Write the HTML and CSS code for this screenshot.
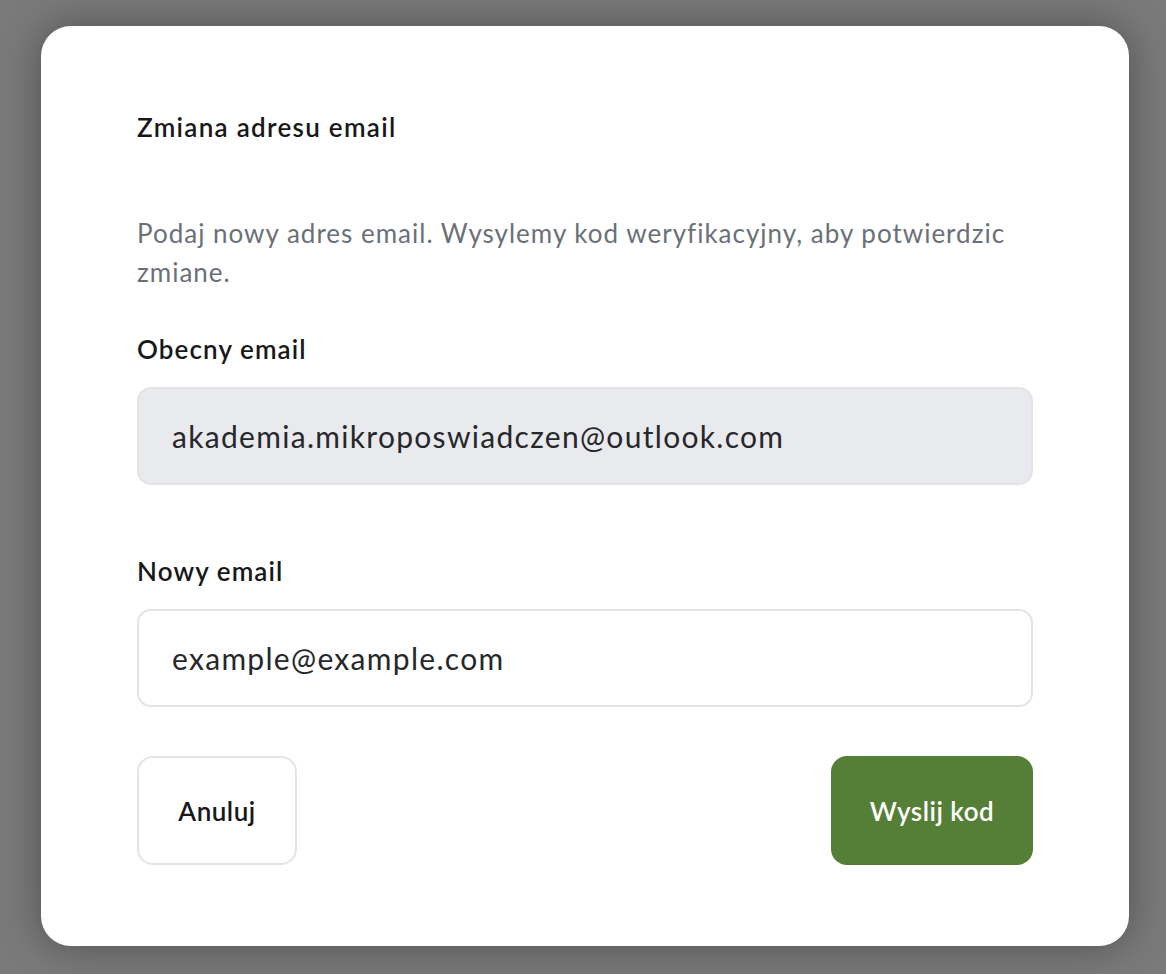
FILE: index.html
```html
<!DOCTYPE html>
<html lang="pl">
<head>
<meta charset="utf-8">
<title>Zmiana adresu email</title>
<link rel="stylesheet" href="styles.css">
</head>
<body>
<div class="overlay">
  <div class="modal">
    <h2 class="title">Zmiana adresu email</h2>
    <p class="desc">Podaj nowy adres email. Wysylemy kod weryfikacyjny, aby potwierdzic zmiane.</p>
    <div class="field">
      <label class="label">Obecny email</label>
      <div class="input input-disabled">akademia.mikroposwiadczen@outlook.com</div>
    </div>
    <div class="field field-new">
      <label class="label">Nowy email</label>
      <div class="input">example@example.com</div>
    </div>
    <div class="actions">
      <button class="btn btn-cancel">Anuluj</button>
      <button class="btn btn-primary">Wyslij kod</button>
    </div>
  </div>
</div>
</body>
</html>
```

FILE: styles.css
```css
* { box-sizing: border-box; }
html, body {
  margin: 0;
  padding: 0;
  height: 100%;
}
body {
  background: #7a7a7a;
  font-family: "Lato", "Noto Sans", sans-serif;
  color: #1c1c1e;
}
.overlay {
  padding: 26px 37px 28px 41px;
}
.modal {
  width: 1088px;
  height: 920px;
  background: #ffffff;
  border-radius: 30px;
  box-shadow: 0 0 40px rgba(0, 0, 0, 0.35);
  padding: 85px 96px 81px 96px;
  display: flex;
  flex-direction: column;
}
.title {
  margin: 0;
  font-size: 26px;
  line-height: 32px;
  font-weight: 600;
  letter-spacing: 1.3px;
  color: #18181b;
}
.desc {
  margin: 71px 0 0 0;
  font-size: 26px;
  line-height: 39px;
  letter-spacing: 1px;
  color: #6b7078;
  font-weight: 400;
}
.field {
  display: flex;
  flex-direction: column;
  margin-top: 41px;
}
.field-new {
  margin-top: 70px;
}
.label {
  font-size: 26px;
  line-height: 32px;
  font-weight: 600;
  letter-spacing: 1.1px;
  color: #18181b;
}
.input {
  margin-top: 22px;
  height: 98px;
  border: 2px solid #e4e4e6;
  border-radius: 14px;
  padding: 0 33px;
  display: flex;
  align-items: center;
  font-size: 30px;
  letter-spacing: 1.3px;
  color: #26272b;
  background: #ffffff;
}
.input-disabled {
  background: #e9eaee;
}
.actions {
  margin-top: 49px;
  display: flex;
  justify-content: space-between;
}
.btn {
  height: 109px;
  border-radius: 16px;
  font-family: inherit;
  font-size: 26px;
  font-weight: 600;
  letter-spacing: 0.5px;
  padding: 0;
  cursor: pointer;
}
.btn-cancel {
  width: 160px;
  background: #ffffff;
  border: 2px solid #e4e4e6;
  color: #18181b;
}
.btn-primary {
  width: 202px;
  background: #557f37;
  border: none;
  color: #ffffff;
}
```
